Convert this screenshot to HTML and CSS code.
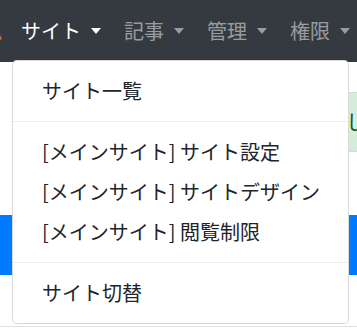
FILE: index.html
```html
<!DOCTYPE html>
<html lang="ja">
<head>
  <meta charset="UTF-8" />
  <meta name="viewport" content="width=device-width, initial-scale=1.0"/>
  <title>サイト管理</title>
  <link rel="stylesheet" href="styles.css">
</head>
<body>
  <nav class="navbar">
    <span class="brand">ム</span>
    <ul class="nav">
      <li class="nav-item open">
        <a class="nav-link active" href="#">サイト<span class="caret"></span></a>
        <!-- open dropdown -->
        <div class="dropdown-menu">
          <a class="dropdown-item" href="#">サイト一覧</a>
          <div class="dropdown-divider"></div>
          <a class="dropdown-item" href="#">[メインサイト] サイト設定</a>
          <a class="dropdown-item" href="#">[メインサイト] サイトデザイン</a>
          <a class="dropdown-item" href="#">[メインサイト] 閲覧制限</a>
          <div class="dropdown-divider"></div>
          <a class="dropdown-item" href="#">サイト切替</a>
        </div>
      </li>
      <li class="nav-item"><a class="nav-link" href="#">記事<span class="caret"></span></a></li>
      <li class="nav-item"><a class="nav-link" href="#">管理<span class="caret"></span></a></li>
      <li class="nav-item"><a class="nav-link" href="#">権限<span class="caret"></span></a></li>
    </ul>
  </nav>

  <main class="content">
    <div class="alert">メインサイトのサイト設定を保存しました</div>
    <div class="bar"></div>
  </main>
  <div class="rule"></div>
</body>
</html>
```

FILE: styles.css
```css
body {
  font-family: "Noto Sans CJK JP", "Noto Sans", sans-serif;
  margin: 0;
  background: #fff;
  color: #212529;
  font-size: 20px;
  overflow: hidden;
}

.navbar {
  background: #343a40;
  height: 62px;
  display: flex;
  align-items: center;
  position: relative;
  z-index: 10;
  white-space: nowrap;
}

.brand {
  flex-shrink: 0;
  display: inline-block;
  width: 3px;
  overflow: hidden;
  color: #c7743a;
  line-height: 30px;
  direction: rtl;
}

.nav {
  flex-shrink: 0;
  list-style: none;
  margin: 0 0 0 8px;
  padding: 0;
  display: flex;
  gap: 2px;
}

.nav-item {
  flex-shrink: 0;
  position: relative;
}

.nav-link {
  display: flex;
  align-items: center;
  padding: 10px;
  line-height: 30px;
  color: rgba(255,255,255,0.5);
  text-decoration: none;
}

.nav-link.active {
  color: #fff;
}

.caret {
  display: inline-block;
  margin-left: 10px;
  margin-right: 1px;
  border-top: 6px solid;
  border-left: 5px solid transparent;
  border-right: 5px solid transparent;
}

.dropdown-menu {
  position: absolute;
  top: 100%;
  left: 1px;
  margin-top: 4px;
  width: 335px;
  padding: 10px 0;
  background: #fff;
  border: 1px solid rgba(0,0,0,0.15);
  border-radius: 5px;
}

.dropdown-item {
  display: block;
  padding: 5px 29px;
  line-height: 30px;
  color: #212529;
  text-decoration: none;
  white-space: nowrap;
}

.dropdown-divider {
  margin: 10px 0;
  border-top: 1px solid #e9ecef;
}

.content {
  padding: 30px 0 0 20px;
}

.alert {
  margin-right: -40px;
  padding: 14px 25px;
  line-height: 30px;
  background: #d4edda;
  border: 1px solid #c3e6cb;
  color: #155724;
  white-space: nowrap;
}

.bar {
  margin: 63px 0 0 -20px;
  height: 60px;
  background: #007bff;
}

.rule {
  margin-top: 51px;
  border-top: 1px solid #dee2e6;
}
```
